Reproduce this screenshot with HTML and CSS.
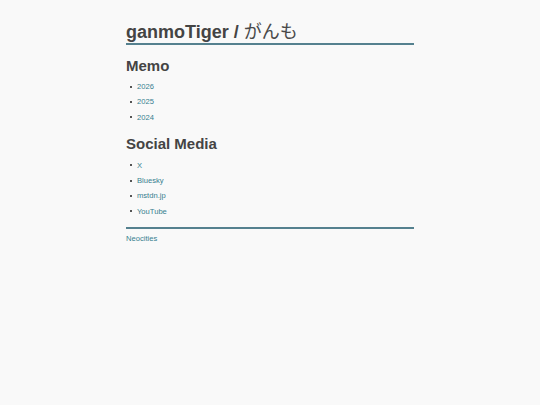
FILE: index.html
```html
<!DOCTYPE html>
<html lang="ja">
<head>
<meta charset="utf-8">
<title>ganmoTiger / がんも</title>
<link rel="stylesheet" href="styles.css">
</head>
<body>
<div class="wrap">
  <header class="site-header">
    <h1 class="title">ganmoTiger / <span class="title-ja">がんも</span></h1>
  </header>
  <main>
    <section class="section">
      <h2 class="heading">Memo</h2>
      <ul class="links">
        <li><a href="#">2026</a></li>
        <li><a href="#">2025</a></li>
        <li><a href="#">2024</a></li>
      </ul>
    </section>
    <section class="section">
      <h2 class="heading">Social Media</h2>
      <ul class="links">
        <li><a href="#">X</a></li>
        <li><a href="#">Bluesky</a></li>
        <li><a href="#">mstdn.jp</a></li>
        <li><a href="#">YouTube</a></li>
      </ul>
    </section>
  </main>
  <footer class="site-footer">
    <a href="#">Neocities</a>
  </footer>
</div>
</body>
</html>
```

FILE: styles.css
```css
html, body {
  margin: 0;
  padding: 0;
}
body {
  background: #f9f9f9;
  color: #444;
  font-family: "Liberation Sans", Arial, "Noto Sans CJK JP", sans-serif;
}
.wrap {
  width: 288px;
  margin: 0 auto;
  padding-top: 19px;
}
.site-header {
  border-bottom: 2px solid #55818f;
  padding-bottom: 0;
}
.title {
  margin: 0;
  font-size: 18px;
  line-height: 22px;
  font-weight: bold;
  color: #444;
}
.title-ja {
  font-weight: normal;
  font-family: "Noto Sans CJK JP", sans-serif;
  color: #4a4a4a;
}
.section {
  margin-top: 12px;
}
.section + .section {
  margin-top: 10px;
}
.heading {
  margin: 0;
  font-size: 15px;
  line-height: 18px;
  font-weight: bold;
  color: #444;
}
.links {
  margin: 4px 0 0;
  padding-left: 4px;
  list-style: none;
  font-size: 7.6px;
  line-height: 15.3px;
}
.section + .section .links {
  margin-top: 5px;
}
.links li::before {
  content: "";
  display: inline-block;
  width: 2px;
  height: 2px;
  background: #555;
  margin-right: 5px;
  vertical-align: 1.5px;
}
a {
  color: #36808f;
  text-decoration: none;
}
.site-footer {
  margin-top: 8px;
  border-top: 2px solid #55818f;
  padding-top: 4px;
  font-size: 7.6px;
  line-height: 12px;
}
```
